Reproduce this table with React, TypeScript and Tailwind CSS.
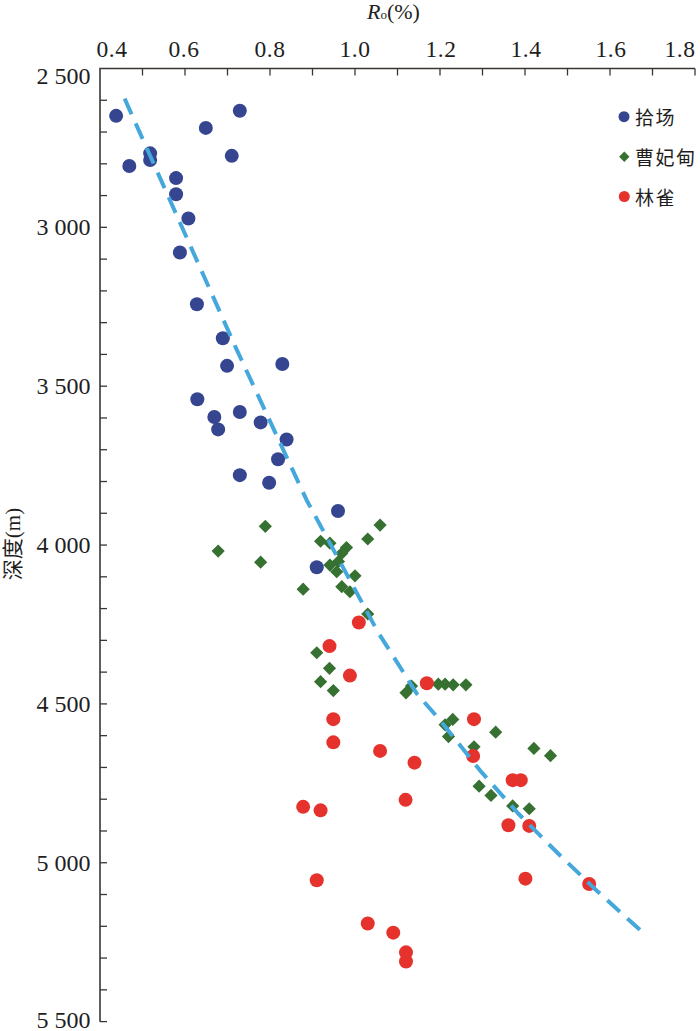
import React from 'react';

// Ro (%) vs burial depth (m), three sub-basins
type Pt = [number, number];

const X0 = 100;
const PX_PER_RO = 425; // px per 1.0 %Ro
const Y0 = 68.5;
const PX_PER_M = 0.3177;

const sx = (ro: number) => X0 + (ro - 0.4) * PX_PER_RO;
const sy = (d: number) => Y0 + (d - 2500) * PX_PER_M;

const shichang: Pt[] = [
  [0.438, 2649], [0.729, 2633], [0.649, 2687], [0.518, 2767], [0.518, 2788],
  [0.469, 2807], [0.71, 2775], [0.579, 2845], [0.579, 2896], [0.608, 2972],
  [0.588, 3079], [0.628, 3242], [0.689, 3349], [0.699, 3436], [0.829, 3430],
  [0.629, 3541], [0.729, 3581], [0.669, 3597], [0.678, 3636], [0.778, 3614],
  [0.839, 3668], [0.819, 3730], [0.729, 3780], [0.798, 3804], [0.96, 3893],
  [0.91, 4070],
];

const caofeidian: Pt[] = [
  [0.789, 3941], [1.059, 3937], [1.03, 3981], [0.678, 4019], [0.778, 4054],
  [0.919, 3988], [0.941, 3994], [0.98, 4008], [0.941, 4063], [0.961, 4052],
  [0.969, 4026], [0.957, 4084], [1.0, 4097], [0.969, 4131], [0.988, 4147],
  [0.878, 4139], [1.03, 4217], [0.91, 4339], [0.94, 4388], [0.919, 4430],
  [0.949, 4458], [1.12, 4465], [1.133, 4444], [1.196, 4438], [1.212, 4438],
  [1.231, 4440], [1.261, 4440], [1.23, 4549], [1.212, 4566], [1.22, 4603],
  [1.331, 4589], [1.28, 4635], [1.421, 4640], [1.46, 4663], [1.292, 4759],
  [1.32, 4788], [1.371, 4821], [1.41, 4830],
];

const linque: Pt[] = [
  [1.009, 4244], [0.94, 4318], [0.988, 4411], [1.169, 4435], [0.949, 4548],
  [1.28, 4548], [0.949, 4621], [1.059, 4648], [1.14, 4685], [1.278, 4664],
  [1.119, 4802], [0.878, 4824], [0.919, 4835], [1.371, 4740], [1.39, 4740],
  [1.361, 4882], [1.41, 4884], [0.91, 5055], [1.401, 5050], [1.551, 5067],
  [1.03, 5191], [1.09, 5220], [1.12, 5282], [1.12, 5311],
];

const trend: Pt[] = [
  [0.458, 2595], [0.72, 3380], [0.886, 3858], [1.054, 4274], [1.106, 4384],
  [1.145, 4467], [1.2, 4551], [1.294, 4709], [1.384, 4845], [1.478, 4971],
  [1.569, 5088], [1.671, 5212],
];

const xLabels: { v: string; x: number }[] = [
  { v: '0.4', x: 112 }, { v: '0.6', x: 184 }, { v: '0.8', x: 270 },
  { v: '1.0', x: 355 }, { v: '1.2', x: 441 }, { v: '1.4', x: 526 },
  { v: '1.6', x: 611 }, { v: '1.8', x: 680 },
];

const yLabels: { v: string; d: number; dy?: number }[] = [
  { v: '2 500', d: 2500, dy: 7.5 }, { v: '3 000', d: 3000 }, { v: '3 500', d: 3500 },
  { v: '4 000', d: 4000 }, { v: '4 500', d: 4500 }, { v: '5 000', d: 5000 },
  { v: '5 500', d: 5500, dy: -1.5 },
];

const SERIF = '"Liberation Serif", "Times New Roman", serif';
const CJK = '"Liberation Serif", "Noto Sans CJK SC", serif';

const BLUE = '#36458f';
const GREEN = '#377132';
const RED = '#e5322c';
const AXIS = '#3b3633';

function Diamond({ x, y, r }: { x: number; y: number; r: number }) {
  return <polygon points={`${x},${y - r} ${x + r},${y} ${x},${y + r} ${x - r},${y}`} fill={GREEN} />;
}

export default function App() {
  const xTicks = Array.from({ length: 14 }, (_, i) => 0.5 + i * 0.1);
  const yTicks = Array.from({ length: 30 }, (_, i) => 2600 + i * 100);

  return (
    <div className="w-[700px] h-[1031px] bg-white">
      <svg width={700} height={1031} viewBox="0 0 700 1031" className="block">
        {/* axis title */}
        <text x={367} y={19} fontFamily={SERIF} fontSize={22} fill="#1e1e1e">
          <tspan fontStyle="italic">R</tspan>
          <tspan fontSize={13}>o</tspan>
          <tspan>(%)</tspan>
        </text>
        <text
          transform="translate(20 544) rotate(-90)"
          textAnchor="middle"
          fontFamily={CJK}
          fontSize={21}
          fill="#1e1e1e"
        >
          深度(m)
        </text>

        {/* axes */}
        <path d={`M695 ${Y0} H${X0} V1021.7`} fill="none" stroke={AXIS} strokeWidth={1.6} />
        {xTicks.map((v) => (
          <line key={v} x1={sx(v)} x2={sx(v)} y1={Y0} y2={Y0 + 7} stroke={AXIS} strokeWidth={1.3} />
        ))}
        {yTicks.map((d) => (
          <line key={d} x1={X0} x2={X0 + 7} y1={sy(d)} y2={sy(d)} stroke={AXIS} strokeWidth={1.3} />
        ))}
        {xLabels.map((l) => (
          <text key={l.v} x={l.x} y={57} textAnchor="middle" fontFamily={SERIF} fontSize={23.5} letterSpacing={0.6} fill="#1e1e1e">
            {l.v}
          </text>
        ))}
        {yLabels.map((l) => (
          <text
            key={l.v}
            x={90.5}
            y={sy(l.d) + 8 + (l.dy ?? 0)}
            textAnchor="end"
            fontFamily={SERIF}
            fontSize={24}
            fill="#1e1e1e"
          >
            {l.v}
          </text>
        ))}

        {/* data */}
        {shichang.map(([v, d], i) => (
          <circle key={`s${i}`} cx={sx(v)} cy={sy(d)} r={7} fill={BLUE} />
        ))}
        {caofeidian.map(([v, d], i) => (
          <Diamond key={`c${i}`} x={sx(v)} y={sy(d)} r={6.6} />
        ))}
        {linque.map(([v, d], i) => (
          <circle key={`l${i}`} cx={sx(v)} cy={sy(d)} r={7} fill={RED} />
        ))}

        <polyline
          points={trend.map(([v, d]) => `${sx(v)},${sy(d)}`).join(' ')}
          fill="none"
          stroke="#45a8dc"
          strokeWidth={4}
          strokeDasharray="17 10"
          strokeLinejoin="round"
        />

        {/* legend */}
        <circle cx={624} cy={116.7} r={5.5} fill={BLUE} />
        <text x={635} y={124.5} fontFamily={CJK} fontSize={19} letterSpacing={1.5} fill="#1e1e1e">拾场</text>
        <Diamond x={624.3} y={156.7} r={5.2} />
        <text x={635} y={164.5} fontFamily={CJK} fontSize={19} letterSpacing={1.5} fill="#1e1e1e">曹妃甸</text>
        <circle cx={624.3} cy={196.5} r={5.5} fill={RED} />
        <text x={635} y={204.5} fontFamily={CJK} fontSize={19} letterSpacing={1.5} fill="#1e1e1e">林雀</text>
      </svg>
    </div>
  );
}
